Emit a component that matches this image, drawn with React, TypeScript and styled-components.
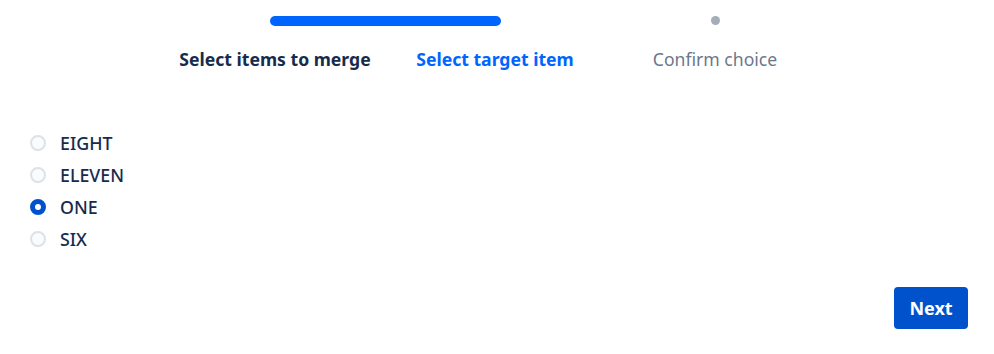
import styled, { createGlobalStyle } from "styled-components";

const GlobalStyle = createGlobalStyle`
  * { box-sizing: border-box; }
  body {
    margin: 0;
    background: #ffffff;
    font-family: "Noto Sans", "Open Sans", sans-serif;
    color: #172b4d;
  }
`;

type StepState = "done" | "current" | "todo";

const steps: { label: string; state: StepState }[] = [
  { label: "Select items to merge", state: "done" },
  { label: "Select target item", state: "current" },
  { label: "Confirm choice", state: "todo" },
];

const items = ["EIGHT", "ELEVEN", "ONE", "SIX"];
const selected = "ONE";

const Page = styled.div`
  width: 994px;
  height: 354px;
  padding: 16px 26px 0 30px;
  display: flex;
  flex-direction: column;
`;

const Tracker = styled.ol`
  list-style: none;
  margin: 0 0 0 135px;
  padding: 0;
  display: grid;
  grid-template-columns: repeat(3, 220px);
`;

const Step = styled.li`
  position: relative;
  display: flex;
  flex-direction: column;
  align-items: center;
`;

const Track = styled.div`
  height: 10px;
  width: 100%;
  position: relative;
`;

const Bar = styled.div`
  position: absolute;
  top: 0;
  left: 105px;
  width: 231px;
  height: 10px;
  border-radius: 5px;
  background: #0065ff;
`;

const Dot = styled.div`
  width: 9px;
  height: 9px;
  border-radius: 50%;
  background: #a5adba;
  margin: 0 auto;
`;

const StepLabel = styled.div<{ $state: StepState }>`
  margin-top: 23px;
  font-size: 17.6px;
  line-height: 20px;
  font-weight: ${(p) => (p.$state === "todo" ? 400 : 700)};
  color: ${(p) =>
    p.$state === "done" ? "#172b4d" : p.$state === "current" ? "#0065ff" : "#6b778c"};
  white-space: nowrap;
`;

const RadioList = styled.div`
  margin-top: 58px;
  display: flex;
  flex-direction: column;
`;

const RadioRow = styled.label`
  display: flex;
  align-items: center;
  gap: 14px;
  height: 32px;
  font-size: 17.8px;
  font-weight: 500;
  color: #172b4d;
  cursor: pointer;
`;

const RadioCircle = styled.span<{ $checked: boolean }>`
  width: 16px;
  height: 16px;
  border-radius: 50%;
  border: ${(p) => (p.$checked ? "5px solid #0052cc" : "2px solid #dfe1e6")};
  background: ${(p) => (p.$checked ? "#ffffff" : "#fafbfc")};
  flex-shrink: 0;
`;

const Footer = styled.div`
  margin-top: 32px;
  display: flex;
  justify-content: flex-end;
`;

const NextButton = styled.button`
  width: 74px;
  height: 42px;
  border: none;
  border-radius: 4px;
  background: #0052cc;
  color: #ffffff;
  font-family: "Noto Sans", "Open Sans", sans-serif;
  font-size: 18px;
  font-weight: 700;
  cursor: pointer;
`;

export default function App() {
  return (
    <>
      <GlobalStyle />
      <Page>
        <Tracker>
          {steps.map((s, i) => (
            <Step key={s.label}>
              <Track>
                {i === 0 && <Bar />}
                {s.state === "todo" && <Dot />}
              </Track>
              <StepLabel $state={s.state}>{s.label}</StepLabel>
            </Step>
          ))}
        </Tracker>
        <RadioList>
          {items.map((it) => (
            <RadioRow key={it}>
              <RadioCircle $checked={it === selected} />
              {it}
            </RadioRow>
          ))}
        </RadioList>
        <Footer>
          <NextButton>Next</NextButton>
        </Footer>
      </Page>
    </>
  );
}
